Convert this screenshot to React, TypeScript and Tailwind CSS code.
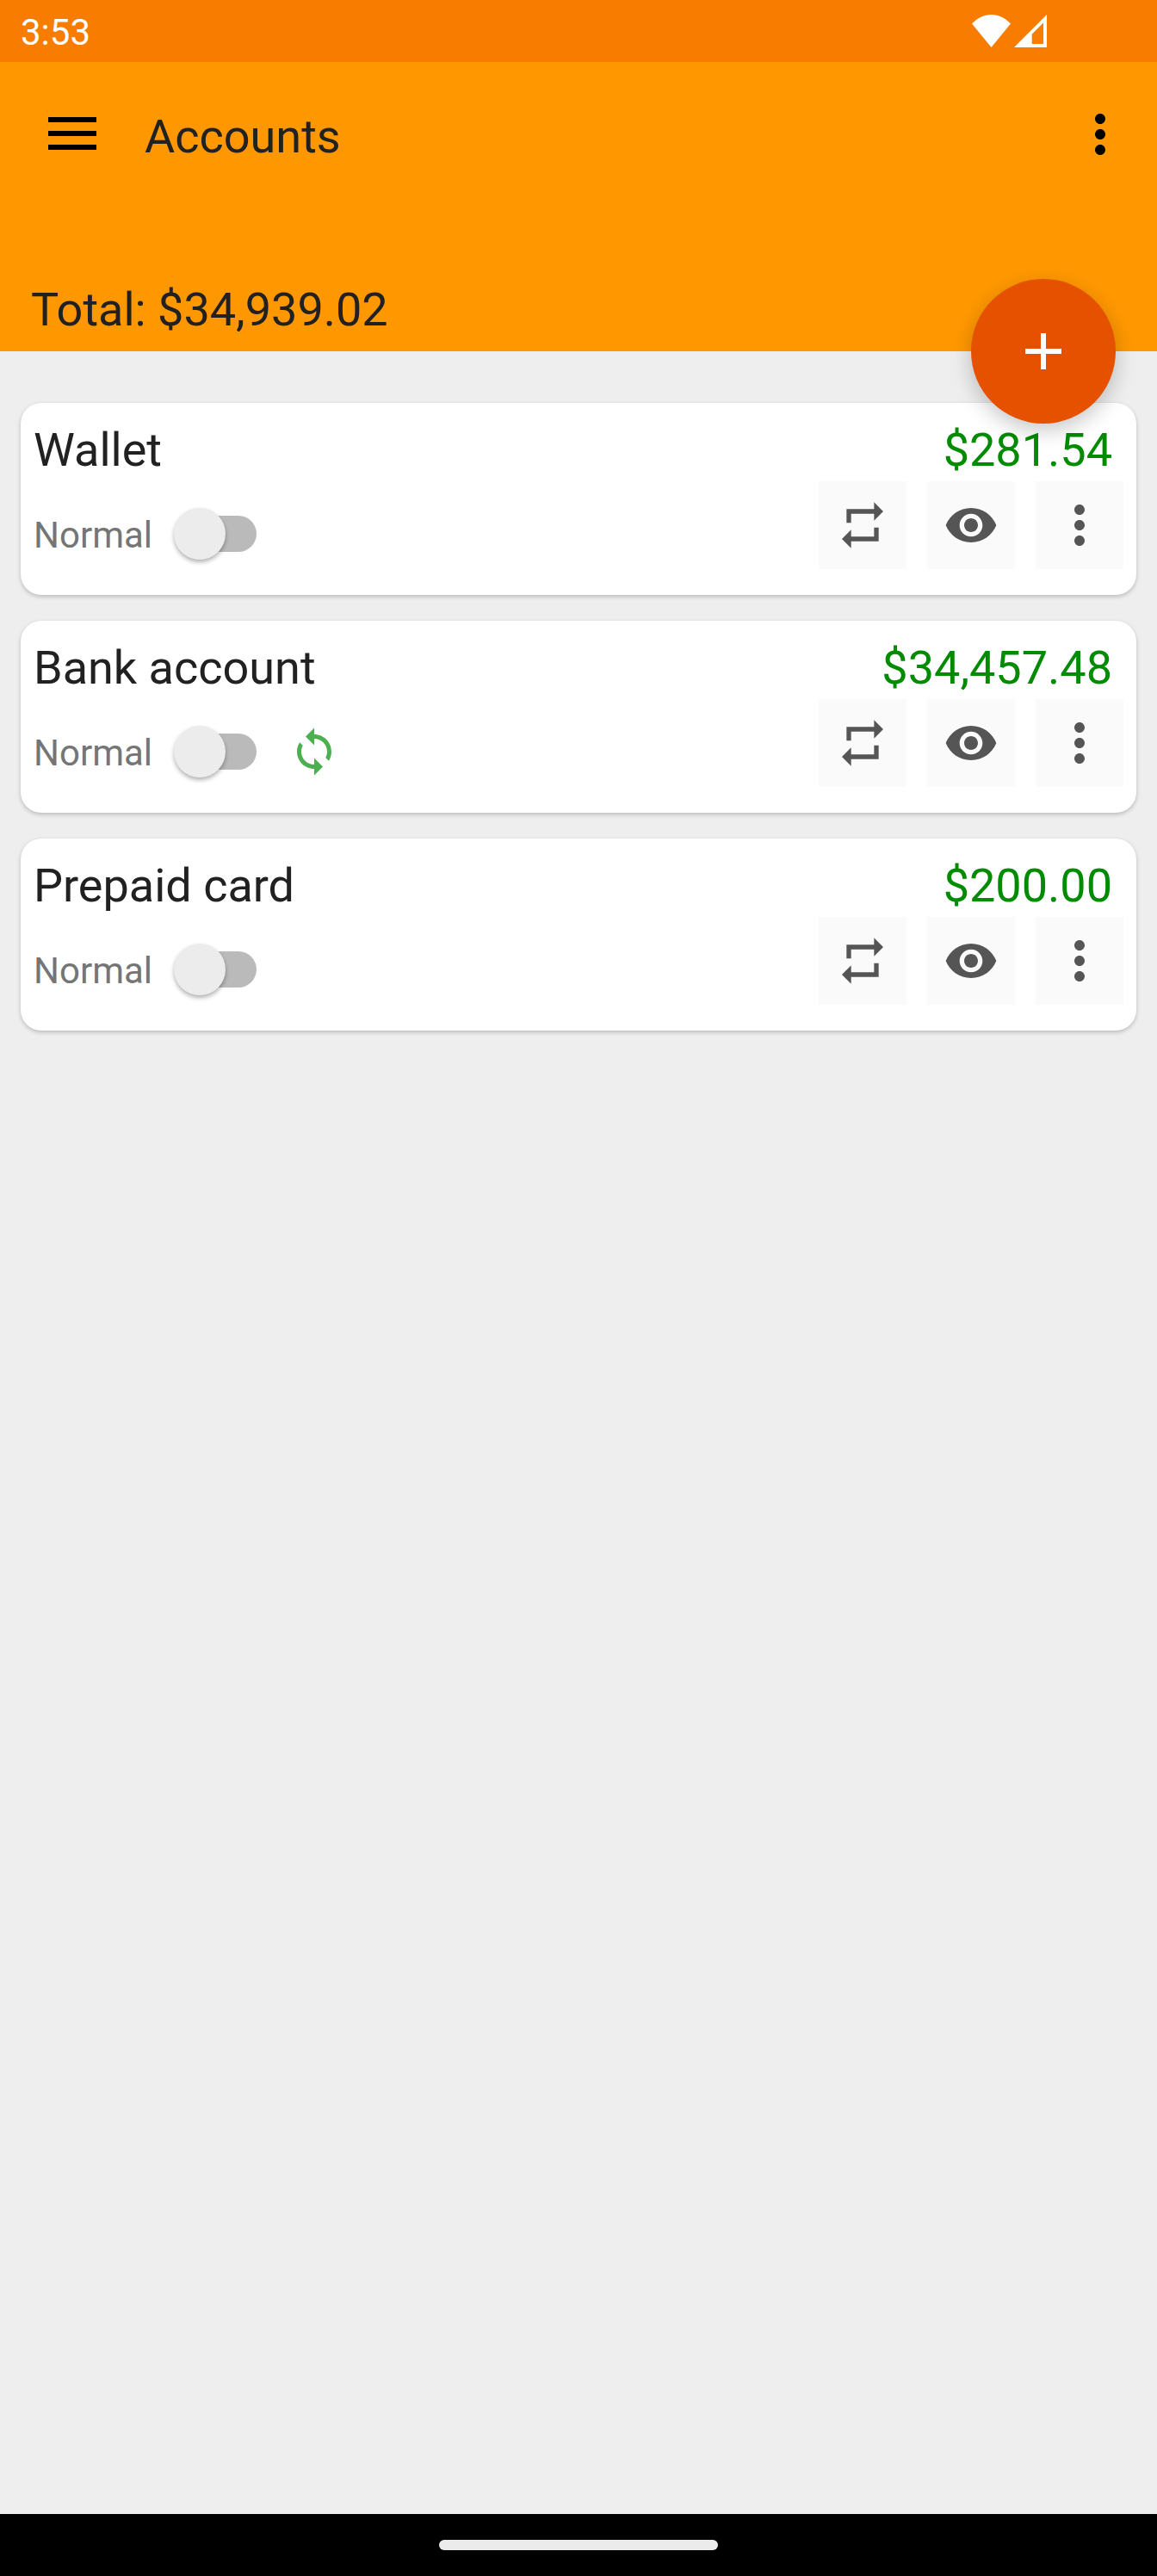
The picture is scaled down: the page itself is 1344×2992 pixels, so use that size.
import { useState, type ReactNode } from "react";

type Account = { name: string; amount: string; synced?: boolean };

const accounts: Account[] = [
  { name: "Wallet", amount: "$281.54" },
  { name: "Bank account", amount: "$34,457.48", synced: true },
  { name: "Prepaid card", amount: "$200.00" },
];

const paths = {
  more: "M12 8c1.1 0 2-.9 2-2s-.9-2-2-2-2 .9-2 2 .9 2 2 2zm0 2c-1.1 0-2 .9-2 2s.9 2 2 2 2-.9 2-2-.9-2-2-2zm0 6c-1.1 0-2 .9-2 2s.9 2 2 2 2-.9 2-2-.9-2-2-2z",
  add: "M19 13h-6v6h-2v-6H5v-2h6V5h2v6h6v2z",
  repeat: "M7 7h10v3l4-4-4-4v3H5v6h2V7zm10 10H7v-3l-4 4 4 4v-3h12v-6h-2v4z",
  eye: "M12 4.5C7 4.5 2.73 7.61 1 12c1.73 4.39 6 7.5 11 7.5s9.27-3.11 11-7.5c-1.73-4.39-6-7.5-11-7.5zM12 17c-2.76 0-5-2.24-5-5s2.24-5 5-5 5 2.24 5 5-2.24 5-5 5zm0-8c-1.66 0-3 1.34-3 3s1.34 3 3 3 3-1.34 3-3-1.34-3-3-3z",
  sync: "M12 4V1L8 5l4 4V6c3.31 0 6 2.69 6 6 0 1.01-.25 1.97-.7 2.8l1.46 1.46C19.54 15.03 20 13.57 20 12c0-4.42-3.58-8-8-8zm0 14c-3.31 0-6-2.69-6-6 0-1.01.25-1.97.7-2.8L5.24 7.74C4.46 8.97 4 10.43 4 12c0 4.42 3.58 8 8 8v3l4-4-4-4v3z",
};

function Icon({ name, className }: { name: keyof typeof paths; className: string }) {
  return (
    <svg viewBox="0 0 24 24" fill="currentColor" aria-hidden="true" className={className}>
      <path d={paths[name]} />
    </svg>
  );
}

function StatusBar() {
  return (
    <div className="flex h-[72px] items-center justify-between bg-[#f77c00] pr-32 pl-6 text-white">
      <span className="pt-1 text-[42px] leading-[50px]">3:53</span>
      <div className="flex items-center gap-1">
        <svg viewBox="0 0 45 38" fill="currentColor" aria-hidden="true" className="h-[38px] w-[45px]">
          <path d="M0 10.6C6.5 3.6 14 0 22.5 0S38.500 3.600 45 10.600L22.500 38Z" />
        </svg>
        <svg viewBox="0 0 38 38" fill="currentColor" fillRule="evenodd" aria-hidden="true" className="size-[38px]">
          <path d="M0 38H38V0ZM34 9.500V34H20.700V22.700Z" />
        </svg>
      </div>
    </div>
  );
}

function Header() {
  return (
    <header className="relative bg-[#ff9800] text-[54px] leading-[64px] text-[#212121]">
      <div className="flex h-[168px] items-center pr-[30px]">
        <button type="button" aria-label="Open menu" className="flex h-[168px] w-[168px] items-center justify-center text-black">
          <svg viewBox="0 0 56 40" fill="currentColor" aria-hidden="true" className="h-[40px] w-[56px]">
            <path d="M0 0H56V6H0ZM0 16H56V22H0ZM0 32H56V38H0Z" />
          </svg>
        </button>
        <h1 className="grow pt-1.5">Accounts</h1>
        <button type="button" aria-label="More options" className="text-black">
          <Icon name="more" className="size-[72px]" />
        </button>
      </div>
      <p className="px-9 pt-[88px] pb-4">Total: $34,939.02</p>
      <button
        type="button"
        aria-label="Add account"
        className="absolute right-12 bottom-0 flex size-[168px] translate-y-1/2 items-center justify-center rounded-full bg-[#e65100] text-white shadow-[0_8px_24px_rgba(0,0,0,0.22)]"
      >
        <Icon name="add" className="size-[72px]" />
      </button>
    </header>
  );
}

function ActionButton({ label, children }: { label: string; children: ReactNode }) {
  return (
    <button type="button" aria-label={label} className="flex size-[102px] items-center justify-center bg-[#fafafa] text-[#555555]">
      {children}
    </button>
  );
}

function AccountCard({ name, amount, synced }: Account) {
  const [on, setOn] = useState(false);
  return (
    <li className="rounded-3xl bg-white pt-[19px] pb-[30px] shadow-[0_2px_5px_rgba(0,0,0,0.22)]">
      <div className="flex justify-between pr-7 pl-[15px] text-[54px] leading-[72px]">
        <h2 className="text-[#212121]">{name}</h2>
        <span className="text-[#008b00]">{amount}</span>
      </div>
      <div className="flex justify-between pr-[15px] pl-[15px]">
        <div className="flex items-center pt-5">
          <label className="flex items-center gap-[31px]">
            <span className="pt-1 text-[42px] leading-[50px] text-[#757575]">Normal</span>
            <input
              type="checkbox"
              role="switch"
              checked={on}
              onChange={() => setOn(!on)}
              className="h-[42px] w-[90px] appearance-none rounded-full bg-[#bababa] before:-mt-[9px] before:-ml-1.5 before:block before:size-[60px] before:rounded-full before:bg-[#ececec] before:shadow-[0_3px_5px_rgba(0,0,0,0.3)] checked:before:translate-x-[42px]"
            />
          </label>
          {synced && <Icon name="sync" className="ml-[37px] size-[60px] text-[#4caf50]" />}
        </div>
        <div className="flex gap-6">
          <ActionButton label={`Transfer from ${name}`}>
            <Icon name="repeat" className="size-16" />
          </ActionButton>
          <ActionButton label={`View ${name}`}>
            <Icon name="eye" className="size-16" />
          </ActionButton>
          <ActionButton label={`Options for ${name}`}>
            <Icon name="more" className="size-[72px]" />
          </ActionButton>
        </div>
      </div>
    </li>
  );
}

export default function App() {
  return (
    <div className="flex min-h-screen flex-col bg-[#eeeeee] font-['Roboto',sans-serif]">
      <StatusBar />
      <Header />
      <main className="grow px-6 pt-[60px]">
        <ul className="flex flex-col gap-[30px]">
          {accounts.map((a) => (
            <AccountCard key={a.name} {...a} />
          ))}
        </ul>
      </main>
      <div className="flex h-[72px] items-center justify-center bg-black">
        <div className="h-3 w-[324px] rounded-full bg-[#ebebeb]" />
      </div>
    </div>
  );
}
